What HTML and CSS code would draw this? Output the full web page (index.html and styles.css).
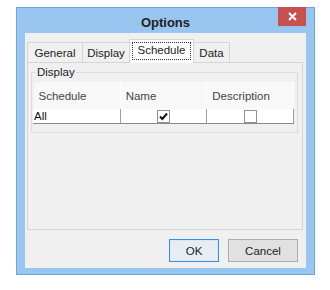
FILE: index.html
```html
<!DOCTYPE html>
<html lang="en">
<head>
    <meta charset="UTF-8">
    <title>Options</title>
    <link rel="stylesheet" href="styles.css">
</head>
<body>
    <div class="window">
        <div class="titlebar">
            <span class="title">Options</span>
            <span class="close">
                <svg width="9" height="9" viewBox="0 0 9 9"><path d="M1 1L8 8M8 1L1 8" stroke="#fff" stroke-width="2"/></svg>
            </span>
        </div>
        <div class="client">
            <div class="tabs">
                <div class="tab tab-general">General</div>
                <div class="tab tab-display">Display</div>
                <div class="tab tab-schedule active"><span class="focus">Schedule</span></div>
                <div class="tab tab-data">Data</div>
            </div>
            <div class="page">
                <fieldset class="group">
                    <legend>Display</legend>
                    <table class="grid">
                        <thead>
                            <tr>
                                <th>Schedule</th>
                                <th>Name</th>
                                <th>Description</th>
                            </tr>
                        </thead>
                        <tbody>
                            <tr>
                                <td class="name-cell">All</td>
                                <td class="check-cell">
                                    <span class="checkbox">
                                        <svg width="11" height="11" viewBox="0 0 11 11"><path d="M2 5.5L4.3 8L9 2.5" fill="none" stroke="#111" stroke-width="2"/></svg>
                                    </span>
                                </td>
                                <td class="check-cell"><span class="checkbox"></span></td>
                            </tr>
                        </tbody>
                    </table>
                </fieldset>
            </div>
            <div class="buttons">
                <button type="button" class="btn btn-ok">OK</button>
                <button type="button" class="btn btn-cancel">Cancel</button>
            </div>
        </div>
    </div>
</body>
</html>
```

FILE: styles.css
```css
body {
    margin: 0;
    padding: 0;
    background: #ffffff;
    font-family: "Liberation Sans", Arial, sans-serif;
    font-size: 11.5px;
    color: #333;
}
.window {
    box-sizing: border-box;
    width: 299px;
    height: 268px;
    margin: 7px 0 0 16px;
    background: #98c6f0;
    border: 1px solid #6ea6dc;
    display: flex;
    flex-direction: column;
}
.titlebar {
    position: relative;
    height: 25px;
    display: flex;
    justify-content: center;
    align-items: center;
    padding-top: 3px;
    box-sizing: border-box;
}
.title {
    font-size: 13px;
    font-weight: bold;
    color: #222;
}
.close {
    position: absolute;
    top: -1px;
    right: 8px;
    width: 28px;
    height: 19px;
    background: #c75050;
    display: flex;
    align-items: center;
    justify-content: center;
}
.client {
    box-sizing: border-box;
    height: 235px;
    margin: 0 8px;
    padding: 5px 3px 0 2px;
    background: #f0f0f0;
    display: flex;
    flex-direction: column;
}
.tabs {
    display: flex;
    align-items: flex-end;
    height: 24px;
    position: relative;
    z-index: 1;
}
.tab {
    box-sizing: border-box;
    height: 20px;
    border: 1px solid #d5d5d5;
    border-bottom: none;
    background: #f0f0f0;
    display: flex;
    align-items: center;
    justify-content: center;
    color: #222;
}
.tab + .tab {
    margin-left: -1px;
}
.tab-general { width: 56px; }
.tab-display { width: 48px; }
.tab-schedule { width: 65px; }
.tab-data { width: 37px; }
.tab.active {
    height: 24px;
    background: #ffffff;
    margin-bottom: -1px;
    padding: 2px 2px 3px;
    align-items: stretch;
}
.focus {
    flex: 1;
    border: 1px dotted #333;
    display: flex;
    align-items: center;
    justify-content: center;
    padding-bottom: 2px;
}
.page {
    box-sizing: border-box;
    height: 168px;
    border: 1px solid #d5d5d5;
    background: #f0f0f0;
    padding: 0 4px 0 3px;
}
.group {
    margin: 3px 0 0;
    padding: 0 1px 8px;
    border: 1px solid #dcdcdc;
}
.group legend {
    margin-left: 3px;
    padding: 0 1px;
    color: #222;
}
.grid {
    width: 261px;
    margin-top: 4px;
    border-collapse: collapse;
    table-layout: fixed;
}
.grid th {
    height: 27px;
    padding: 0 0 0 5px;
    background: #f8f8f8;
    border-right: 1px solid #ffffff;
    font-weight: normal;
    text-align: left;
    color: #444;
}
.grid td {
    height: 14px;
    padding: 0;
    background: #ffffff;
    border-right: 1px solid #a0a0a0;
    border-bottom: 1px solid #8a8a8a;
}
.grid td:first-child {
    border-left: 1px solid #ffffff;
}
.name-cell {
    padding-left: 1px;
    color: #111;
    line-height: 14px;
}
.check-cell {
    text-align: center;
    line-height: 0;
}
.checkbox {
    display: inline-flex;
    align-items: center;
    justify-content: center;
    box-sizing: border-box;
    width: 13px;
    height: 13px;
    border: 1px solid #8f8f8f;
    background: #ffffff;
    vertical-align: middle;
}
.buttons {
    display: flex;
    justify-content: flex-end;
    gap: 9px;
    margin-top: 9px;
    padding-right: 5px;
}
.btn {
    box-sizing: border-box;
    height: 23px;
    font-family: "Liberation Sans", Arial, sans-serif;
    font-size: 11.5px;
    color: #222;
    padding: 0;
    border-radius: 0;
}
.btn-ok {
    width: 50px;
    border: 1px solid #3c8fe0;
    background: #e8edf3;
    box-shadow: inset 0 0 0 1px #d8e8f8;
}
.btn-cancel {
    width: 70px;
    border: 1px solid #adadad;
    background: #e1e1e1;
}
```
